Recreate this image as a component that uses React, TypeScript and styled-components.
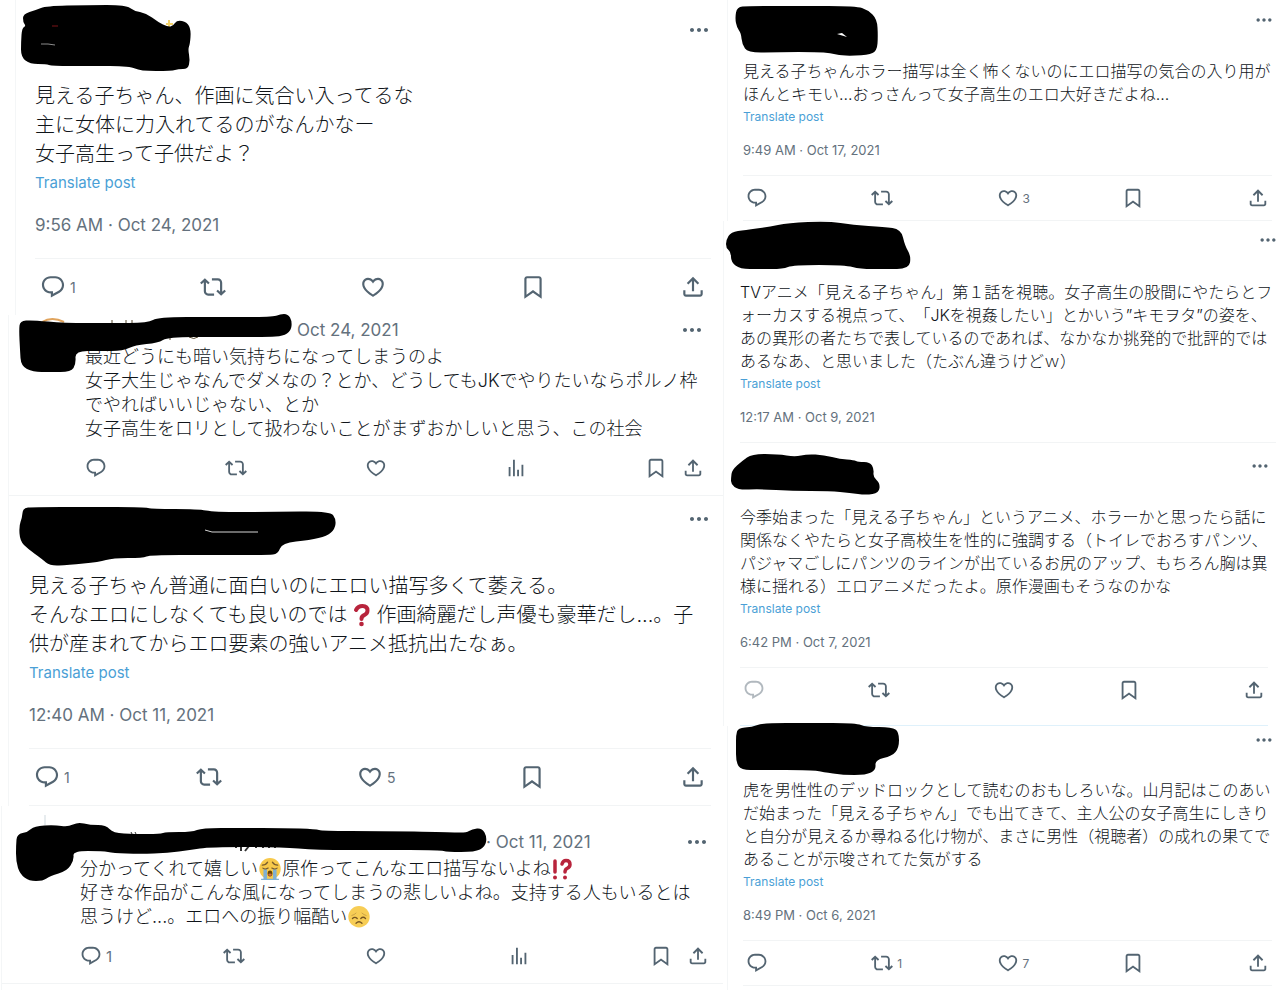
import React from "react";
import styled, { createGlobalStyle, css } from "styled-components";

type Size = "large" | "reply" | "compact";

const LATIN = `Inter, "Liberation Sans"`;
const FONT = `${LATIN}, "Noto Sans CJK JP", sans-serif`;

const metrics = {
  large: { text: 20, line: 29, link: 15, linkLine: 28, date: 17, dateLine: 24, dateTop: 16, dateBottom: 21, icon: 26, bar: 56, barPad: 5, count: 14, more: 24, moreShift: 0 },
  reply: { text: 18, line: 24, link: 15, linkLine: 28, date: 17, dateLine: 30, dateTop: 0, dateBottom: 0, icon: 22, bar: 54, barPad: 0, count: 15, more: 24, moreShift: 0 },
  compact: { text: 16, line: 23, link: 12, linkLine: 22, date: 13, dateLine: 20, dateTop: 12, dateBottom: 15, icon: 22, bar: 44, barPad: 3, count: 12, more: 20, moreShift: -2 },
};

const GlobalStyle = createGlobalStyle`
  * { box-sizing: border-box; }
  body { margin: 0; background: #fff; color: #0f1419; font-family: ${FONT}; }
  p { margin: 0; }
`;

const Board = styled.main`
  display: grid;
  grid-template-columns: minmax(0, 723fr) minmax(0, 557fr);
  min-height: 100vh;
  overflow: hidden;
`;

const Column = styled.div`
  display: flex;
  flex-direction: column;
`;

const Card = styled.article<{ $edge: number; $left: number; $right: number; $last?: boolean }>`
  position: relative;
  flex: ${(p) => (p.$last ? "1 0 auto" : "none")};
  margin-left: ${(p) => p.$edge}px;
  padding-left: ${(p) => p.$left}px;
  padding-right: ${(p) => p.$right}px;
  border-left: 1px solid #f4f6f7;
`;

const Header = styled.header<{ $height: number; $top: number; $size: Size }>`
  display: flex;
  align-items: flex-start;
  justify-content: flex-end;
  height: ${(p) => p.$height}px;
  padding-top: ${(p) => p.$top}px;
  margin-right: ${(p) => metrics[p.$size].moreShift}px;
`;

const HeaderDate = styled.time<{ $indent: number }>`
  flex: 1;
  padding-left: ${(p) => p.$indent}px;
  font-size: 17px;
  line-height: 30px;
  color: #64717d;
  white-space: nowrap;
`;

const plainButton = css`
  display: flex;
  align-items: center;
  padding: 0;
  border: 0;
  background: none;
  color: #536471;
  font-family: inherit;
  cursor: pointer;
`;

const MoreButton = styled.button<{ $tall: boolean }>`
  ${plainButton}
  height: ${(p) => (p.$tall ? "30px" : "auto")};
`;

const Body = styled.p<{ $size: Size }>`
  font-size: ${(p) => metrics[p.$size].text}px;
  line-height: ${(p) => metrics[p.$size].line}px;
  font-weight: 300;
  text-spacing-trim: space-all;
`;

const Line = styled.span<{ $size: Size }>`
  display: block;
  height: ${(p) => metrics[p.$size].line}px;
  white-space: nowrap;
`;

const Translate = styled.a<{ $size: Size }>`
  display: block;
  width: max-content;
  font-size: ${(p) => metrics[p.$size].link}px;
  line-height: ${(p) => metrics[p.$size].linkLine}px;
  color: #4a9fd6;
  text-decoration: none;
`;

const PostDate = styled.time<{ $size: Size }>`
  display: block;
  margin-top: ${(p) => metrics[p.$size].dateTop}px;
  margin-bottom: ${(p) => metrics[p.$size].dateBottom}px;
  font-size: ${(p) => metrics[p.$size].date}px;
  line-height: ${(p) => metrics[p.$size].dateLine}px;
  color: #64717d;
`;

const Rule = styled.hr<{ $tint?: boolean; $bleed?: number; $bleedEnd?: number }>`
  height: 1px;
  margin: 0 ${(p) => -(p.$bleedEnd ?? 0)}px 0 ${(p) => -(p.$bleed ?? 0)}px;
  border: 0;
  background: ${(p) => (p.$tint ? "#dff1fb" : "#f2f4f5")};
`;

const Bar = styled.div<{ $size: Size; $tail?: number }>`
  display: flex;
  align-items: center;
  justify-content: space-between;
  height: ${(p) => metrics[p.$size].bar}px;
  padding: 0 ${(p) => metrics[p.$size].barPad}px;
  margin-bottom: ${(p) => p.$tail ?? 0}px;
`;

const Slot = styled.div<{ $grow?: boolean }>`
  display: flex;
  flex: ${(p) => (p.$grow ? "1 1 0" : "none")};
  gap: 15px;
`;

const Action = styled.button<{ $faded?: boolean; $size: Size }>`
  ${plainButton}
  position: relative;
  width: ${(p) => metrics[p.$size].icon}px;
  opacity: ${(p) => (p.$faded ? 0.45 : 1)};
`;

const Count = styled.span<{ $size: Size }>`
  position: absolute;
  left: calc(100% + 4px);
  font-size: ${(p) => metrics[p.$size].count}px;
  color: #64717d;
`;

const Scribble = styled.svg`
  position: absolute;
  top: 0;
  left: 0;
  overflow: visible;
  pointer-events: none;
`;

const EmojiSvg = styled.svg`
  display: inline-block;
  vertical-align: -5px;
  margin: 0 1px;
`;

const paths = {
  reply: "M1.751 10c0-4.42 3.584-8 8.005-8h4.366c4.49 0 8.129 3.64 8.129 8.13 0 2.96-1.607 5.68-4.196 7.11l-8.054 4.46v-3.69h-.067c-4.49.1-8.183-3.51-8.183-8.01zm8.005-6c-3.317 0-6.005 2.69-6.005 6 0 3.37 2.77 6.08 6.138 6.01l.351-.01h1.761v2.3l5.087-2.81c1.951-1.08 3.163-3.13 3.163-5.36 0-3.39-2.744-6.13-6.129-6.13H9.756z",
  repost: "M4.5 3.88l4.432 4.14-1.364 1.46L5.5 7.55V16c0 1.1.896 2 2 2H13v2H7.5c-2.209 0-4-1.79-4-4V7.55L1.432 9.48.068 8.02 4.5 3.88zM16.5 6H11V4h5.5c2.209 0 4 1.79 4 4v8.45l2.068-1.93 1.364 1.46-4.432 4.14-4.432-4.14 1.364-1.46 2.068 1.93V8c0-1.1-.896-2-2-2z",
  like: "M16.697 5.5c-1.222-.06-2.679.51-3.89 2.16l-.805 1.09-.806-1.09C9.984 6.01 8.526 5.44 7.304 5.5c-1.243.07-2.349.78-2.91 1.91-.552 1.12-.633 2.78.479 4.82 1.074 1.97 3.257 4.27 7.129 6.61 3.87-2.34 6.052-4.64 7.126-6.61 1.111-2.04 1.03-3.7.477-4.82-.561-1.13-1.666-1.84-2.908-1.91zm4.187 7.69c-1.351 2.48-4.001 5.12-8.379 7.67l-.503.3-.504-.3c-4.379-2.55-7.029-5.19-8.382-7.67-1.36-2.5-1.41-4.86-.514-6.67.887-1.79 2.647-2.91 4.601-3.01 1.651-.09 3.368.56 4.798 2.01 1.429-1.45 3.146-2.1 4.796-2.01 1.954.1 3.714 1.22 4.601 3.01.896 1.81.846 4.17-.514 6.67z",
  views: "M8.75 21V3h2v18h-2zM18 21V8.5h2V21h-2zM4 21l.004-10h2L6 21H4zm9.248 0v-7h2v7h-2z",
  bookmark: "M4 4.5C4 3.12 5.119 2 6.5 2h11C18.881 2 20 3.12 20 4.5v18.44l-8-5.71-8 5.71V4.5zM6.5 4c-.276 0-.5.22-.5.5v14.56l6-4.29 6 4.29V4.5c0-.28-.224-.5-.5-.5h-11z",
  share: "M12 2.59l5.7 5.7-1.41 1.42L13 6.41V16h-2V6.41l-3.3 3.3-1.41-1.42L12 2.59zM21 15l-.02 3.51c0 1.38-1.12 2.49-2.5 2.49H5.5C4.11 21 3 19.88 3 18.5V15h2v3.5c0 .28.22.5.5.5h12.98c.28 0 .5-.22.5-.5L19 15h2z",
  more: "M3 12c0-1.1.9-2 2-2s2 .9 2 2-.9 2-2 2-2-.9-2-2zm9 2c1.1 0 2-.9 2-2s-.9-2-2-2-2 .9-2 2 .9 2 2 2zm7 0c1.1 0 2-.9 2-2s-.9-2-2-2-2 .9-2 2 .9 2 2 2z",
};

type IconName = keyof typeof paths;

const Icon = ({ name, size }: { name: IconName; size: number }) => (
  <svg width={size} height={size} viewBox="0 0 24 24" fill="currentColor" aria-hidden="true">
    <path d={paths[name]} />
  </svg>
);

const Sob = () => (
  <EmojiSvg width="22" height="22" viewBox="0 0 36 37" role="img" aria-label="loudly crying face">
    <circle cx="18" cy="18" r="18" fill="#f7c94b" />
    <path d="M3 35h30v2H3zM7 19h6v17H7zM23 19h6v17h-6z" fill="#7fb0d2" />
    <path d="M5 12q6 0 9-5M31 12q-6 0-9-5M6 17q4 3 9 0M30 17q-4 3-9 0" fill="none" stroke="#7a5c2c" strokeWidth="2" strokeLinecap="round" />
    <ellipse cx="18" cy="26" rx="4" ry="5" fill="#664500" />
    <ellipse cx="18" cy="28" rx="3" ry="2" fill="#d46a4c" />
  </EmojiSvg>
);

const Disappointed = () => (
  <EmojiSvg width="22" height="22" viewBox="0 0 36 37" role="img" aria-label="disappointed face">
    <circle cx="18" cy="18" r="18" fill="#f7cd55" />
    <path d="M7 21q4-4 8 0M21 21q4-4 8 0M13 29q5-5 10 0" fill="none" stroke="#765522" strokeWidth="2.2" strokeLinecap="round" />
    <path d="M6 16q4-1 7-4M30 16q-4-1-7-4" fill="none" stroke="#b8913f" strokeWidth="1.2" strokeLinecap="round" />
  </EmojiSvg>
);

const Question = () => (
  <EmojiSvg width="27" height="24" viewBox="0 0 27 24" role="img" aria-label="question mark">
    <path d="M8 7q2-4 6.500-4q5 0 5 4.500q0 3-3 4.500q-3 1-3 4" fill="none" stroke="#b8243c" strokeWidth="4" strokeLinecap="round" />
    <circle cx="13.500" cy="21" r="2.300" fill="#b8243c" />
  </EmojiSvg>
);

const Interrobang = () => (
  <EmojiSvg width="20" height="22" viewBox="0 0 20 22" role="img" aria-label="exclamation question mark">
    <path d="M3 3v11M10 6q1-3.500 4-3.500q4 0 4 4q0 2.500-3 4q-2 1-2 3.500" fill="none" stroke="#b8243c" strokeWidth="3.500" strokeLinecap="round" />
    <circle cx="3" cy="19.500" r="2" fill="#b8243c" />
    <circle cx="13" cy="19.500" r="2" fill="#b8243c" />
  </EmojiSvg>
);

/* Rounds a polygon by running quadratic curves through its edge midpoints. */
const smooth = (source: string) => {
  const pts = source.split(" ").map((pair) => pair.split(",").map(Number));
  const mid = (a: number[], b: number[]) => `${(a[0] + b[0]) / 2} ${(a[1] + b[1]) / 2}`;
  const last = pts[pts.length - 1];
  return (
    `M${mid(last, pts[0])}` +
    pts.map((p, i) => `Q${p[0]} ${p[1]} ${mid(p, pts[(i + 1) % pts.length])}`).join("") +
    "Z"
  );
};

type PostData = {
  id: string;
  size: Size;
  edge: number;
  left: number;
  right: number;
  header: number;
  headerTop: number;
  origin: [number, number];
  blot: string;
  under?: React.ReactNode;
  over?: React.ReactNode;
  lines: React.ReactNode[];
  date: string;
  dateIndent?: number;
  bar?: boolean;
  tail?: number;
  counts?: Partial<Record<IconName, number>>;
  fadedReply?: boolean;
  closing?: "none" | "plain" | "tint" | "full";
  last?: boolean;
};

const leftPosts: PostData[] = [
  {
    id: "a", size: "large", edge: 15, left: 19, right: 12, header: 82, headerTop: 18, origin: [16, 0],
    blot: "23,22 23,14 36,10 46,6 88,5 126,5 134,11 146,13 158,22 168,27 173,26 177,20 187,22 191,30 190,44 188,49 190,60 188,69 178,69 172,71 140,71 130,66 90,66 52,66 46,64 30,64 21,57 21,42 22,28 26,26",
    under: <path d="M169 20v7M166 24h7" stroke="#f3d36b" strokeWidth="2" />,
    over: (
      <>
        <path d="M52 26h6" stroke="#7d1418" strokeWidth="1" />
        <path d="M41 44h7l7 1" stroke="#8b8b8b" strokeWidth="1" fill="none" />
      </>
    ),
    lines: ["見える子ちゃん、作画に気合い入ってるな", "主に女体に力入れてるのがなんかなー", "女子高生って子供だよ？"],
    date: "9:56 AM · Oct 24, 2021", bar: true, counts: { reply: 1 }, closing: "none",
  },
  {
    id: "b", size: "reply", edge: 8, left: 76, right: 19, header: 30, headerTop: 0, origin: [9, 315],
    blot: "19,330 20,321 32,320 64,323 110,323 148,323 158,317 215,317 274,317 280,314 288,314 292,321 291,331 283,336 268,337 220,337 168,337 158,343 135,345 123,351 100,351 75,351 76,364 71,372 50,372 33,372 21,366 20,350",
    under: (
      <>
        <path d="M42 322q10-6 22 0" stroke="#e0a35c" strokeWidth="2" fill="none" />
        <path d="M112 320v4M126 320v4M132 320v4M170 338v2M189 337q5 3 9 0" stroke="#54482f" strokeWidth="1" fill="none" />
      </>
    ),
    lines: [
      "最近どうにも暗い気持ちになってしまうのよ",
      "女子大生じゃなんでダメなの？とか、どうしてもJKでやりたいならポルノ枠",
      "でやればいいじゃない、とか",
      "女子高生をロリとして扱わないことがまずおかしいと思う、この社会",
    ],
    date: "Oct 24, 2021", dateIndent: 212, bar: true, closing: "full",
  },
  {
    id: "c", size: "large", edge: 8, left: 20, right: 12, header: 76, headerTop: 11, origin: [9, 496],
    blot: "22,518 23,508 33,507 90,507 144,507 152,509 198,509 214,512 270,512 330,511 336,519 335,529 327,536 310,540 282,543 278,554 268,555 210,555 150,555 143,558 113,558 99,562 68,565 50,566 42,559 28,549 20,541 19,526",
    over: <path d="M205 530l7 2h46" stroke="#d5d5d5" strokeWidth="1" fill="none" />,
    lines: [
      "見える子ちゃん普通に面白いのにエロい描写多くて萎える。",
      <>そんなエロにしなくても良いのでは<Question />作画綺麗だし声優も豪華だし...。子</>,
      "供が産まれてからエロ要素の強いアニメ抵抗出たなぁ。",
    ],
    date: "12:40 AM · Oct 11, 2021", bar: true, counts: { reply: 1, like: 5 }, closing: "plain",
  },
  {
    id: "d", size: "reply", edge: 1, left: 78, right: 14, header: 51, headerTop: 21, origin: [2, 806],
    blot: "16,845 17,834 28,832 34,826 55,825 68,827 78,822 90,825 106,825 113,833 135,834 160,834 166,832 192,832 202,828 240,828 284,828 316,829 322,831 380,831 448,832 466,833 472,829 482,828 487,837 485,847 475,852 447,852 440,850 380,850 317,850 280,847 210,847 190,850 168,853 140,854 113,853 103,851 73,851 74,860 67,871 50,876 43,881 29,881 20,874 16,862",
    under: (
      <>
        <path d="M45 815v10" stroke="#cfd9de" strokeWidth="1" />
        <path d="M131 832l1 2M135 832l1 2" stroke="#333" strokeWidth="1" />
        <path d="M236 846v2M241 846v5M249 846l-4 5M256 846v2M263 846v2M269 846v2M275 846v2" stroke="#333" strokeWidth="2" />
      </>
    ),
    lines: [
      <>分かってくれて嬉しい<Sob />原作ってこんなエロ描写ないよね<Interrobang /></>,
      "好きな作品がこんな風になってしまうの悲しいよね。支持する人もいるとは",
      <>思うけど...。エロへの振り幅酷い<Disappointed /></>,
    ],
    date: "· Oct 11, 2021", dateIndent: 406, bar: true, counts: { reply: 1 }, closing: "full", last: true,
  },
];

const rightPosts: PostData[] = [
  {
    id: "e", size: "compact", edge: 4, left: 15, right: 8, header: 60, headerTop: 10, origin: [728, 0],
    blot: "735,18 737,7 748,6 800,6 856,6 868,10 877,19 878,36 877,51 868,55 843,56 830,53 817,52 780,52 748,53 742,44 741,33 737,28",
    over: <path d="M837 34l5-1 5 4z" fill="#fff" />,
    lines: ["見える子ちゃんホラー描写は全く怖くないのにエロ描写の気合の入り用が", "ほんとキモい...おっさんって女子高生のエロ大好きだよね..."],
    date: "9:49 AM · Oct 17, 2021", bar: true, counts: { like: 3 }, closing: "plain",
  },
  {
    id: "f", size: "compact", edge: 0, left: 16, right: 4, header: 60, headerTop: 9, origin: [724, 221],
    blot: "726,240 731,232 745,230 768,227 788,223 828,221 853,225 884,227 901,229 905,246 911,256 909,269 885,269 860,269 845,265 793,265 783,269 760,269 740,269 731,262 731,252 726,248",
    lines: [
      "TVアニメ「見える子ちゃん」第１話を視聴。女子高生の股間にやたらとフ",
      "ォーカスする視点って、「JKを視姦したい」とかいう”キモヲタ”の姿を、",
      "あの異形の者たちで表しているのであれば、なかなか挑発的で批評的では",
      "あるなあ、と思いました（たぶん違うけどｗ）",
    ],
    date: "12:17 AM · Oct 9, 2021", closing: "none",
  },
  {
    id: "g", size: "compact", edge: 0, left: 16, right: 12, header: 63, headerTop: 13, origin: [724, 443],
    blot: "731,478 732,470 742,461 752,454 778,454 795,457 807,454 824,455 840,459 854,460 858,462 870,462 874,469 873,477 880,483 879,493 866,495 850,493 830,491 792,491 760,489 738,490 731,484",
    lines: [
      "今季始まった「見える子ちゃん」というアニメ、ホラーかと思ったら話に",
      "関係なくやたらと女子高校生を性的に強調する（トイレでおろすパンツ、",
      "パジャマごしにパンツのラインが出ているお尻のアップ、もちろん胸は異",
      "様に揺れる）エロアニメだったよ。原作漫画もそうなのかな",
    ],
    date: "6:42 PM · Oct 7, 2021", bar: true, tail: 13, fadedReply: true, closing: "tint",
  },
  {
    id: "h", size: "compact", edge: 4, left: 15, right: 8, header: 53, headerTop: 4, origin: [728, 726],
    blot: "736,735 738,728 752,727 763,723 810,723 856,723 866,727 892,727 899,732 899,748 892,756 875,760 876,770 866,775 843,775 823,772 812,770 760,770 741,770 736,762 736,746",
    lines: [
      "虎を男性性のデッドロックとして読むのおもしろいな。山月記はこのあい",
      "だ始まった「見える子ちゃん」でも出てきて、主人公の女子高生にしきり",
      "と自分が見えるか尋ねる化け物が、まさに男性（視聴者）の成れの果てで",
      "あることが示唆されてた気がする",
    ],
    date: "8:49 PM · Oct 6, 2021", bar: true, counts: { repost: 1, like: 7 }, closing: "plain", last: true,
  },
];

const Post = ({ post }: { post: PostData }) => {
  const { size } = post;
  const m = metrics[size];
  const isReply = size === "reply";

  const action = (name: IconName) => (
    <Action key={name} type="button" aria-label={name} $size={size} $faded={name === "reply" && post.fadedReply}>
      <Icon name={name} size={m.icon} />
      {post.counts?.[name] !== undefined && <Count $size={size}>{post.counts[name]}</Count>}
    </Action>
  );

  return (
    <Card $edge={post.edge} $left={post.left} $right={post.right} $last={post.last}>
      <Header $height={post.header} $top={post.headerTop} $size={size}>
        {isReply && <HeaderDate $indent={post.dateIndent ?? 0}>{post.date}</HeaderDate>}
        <MoreButton type="button" aria-label="more" $tall={isReply}>
          <Icon name="more" size={m.more} />
        </MoreButton>
      </Header>
      <Body $size={size} lang="ja">
        {post.lines.map((line, i) => (
          <Line key={i} $size={size}>{line}</Line>
        ))}
      </Body>
      {!isReply && (
        <>
          <Translate href="#" $size={size}>Translate post</Translate>
          <PostDate $size={size}>{post.date}</PostDate>
          <Rule />
        </>
      )}
      {post.bar && (
        <Bar $size={size} $tail={post.tail}>
          {isReply ? (
            <>
              {(["reply", "repost", "like", "views"] as IconName[]).map((name) => (
                <Slot key={name} $grow>{action(name)}</Slot>
              ))}
              <Slot>{action("bookmark")}{action("share")}</Slot>
            </>
          ) : (
            (["reply", "repost", "like", "bookmark", "share"] as IconName[]).map(action)
          )}
        </Bar>
      )}
      {post.closing !== "none" && (
        <Rule
          $tint={post.closing === "tint"}
          $bleed={post.closing === "full" ? post.left : 0}
          $bleedEnd={post.closing === "full" ? post.right : 0}
        />
      )}
      <Scribble width="10" height="10" viewBox={`${post.origin[0]} ${post.origin[1]} 10 10`} aria-hidden="true">
        {post.under}
        <path d={smooth(post.blot)} fill="#000" />
        {post.over}
      </Scribble>
    </Card>
  );
};

export default function App() {
  return (
    <>
      <GlobalStyle />
      <Board>
        <Column>{leftPosts.map((p) => <Post key={p.id} post={p} />)}</Column>
        <Column>{rightPosts.map((p) => <Post key={p.id} post={p} />)}</Column>
      </Board>
    </>
  );
}
